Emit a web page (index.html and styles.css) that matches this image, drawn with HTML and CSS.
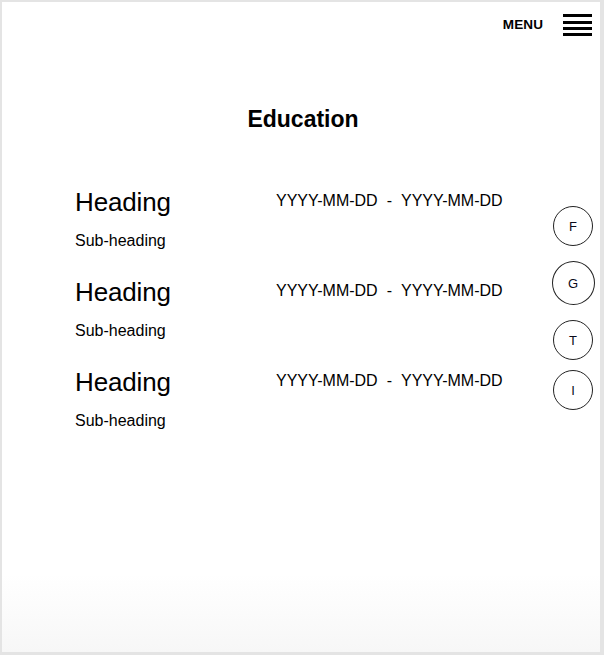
FILE: index.html
```html
<!DOCTYPE html>
<html lang="en">
<head>
<meta charset="utf-8">
<title>Education</title>
<link rel="stylesheet" href="styles.css">
</head>
<body>
<div class="frame">
  <header class="topbar">
    <span class="menu-label">MENU</span>
    <span class="burger" aria-label="Menu">
      <span class="bar"></span>
      <span class="bar"></span>
      <span class="bar"></span>
      <span class="bar"></span>
    </span>
  </header>
  <div class="main">
    <section class="content">
      <h1 class="title">Education</h1>
      <div class="entry">
        <div class="entry-top">
          <h2 class="entry-heading">Heading</h2>
          <div class="entry-dates"><span>YYYY-MM-DD</span><span class="dash">-</span><span>YYYY-MM-DD</span></div>
        </div>
        <p class="entry-sub">Sub-heading</p>
      </div>
      <div class="entry">
        <div class="entry-top">
          <h2 class="entry-heading">Heading</h2>
          <div class="entry-dates"><span>YYYY-MM-DD</span><span class="dash">-</span><span>YYYY-MM-DD</span></div>
        </div>
        <p class="entry-sub">Sub-heading</p>
      </div>
      <div class="entry">
        <div class="entry-top">
          <h2 class="entry-heading">Heading</h2>
          <div class="entry-dates"><span>YYYY-MM-DD</span><span class="dash">-</span><span>YYYY-MM-DD</span></div>
        </div>
        <p class="entry-sub">Sub-heading</p>
      </div>
    </section>
    <nav class="social">
      <a class="social-link social-f">F</a>
      <a class="social-link social-g">G</a>
      <a class="social-link social-t">T</a>
      <a class="social-link social-i">I</a>
    </nav>
  </div>
</div>
</body>
</html>
```

FILE: styles.css
```css
* { box-sizing: border-box; }

html, body {
  margin: 0;
  padding: 0;
}

body {
  font-family: "Liberation Sans", Arial, Helvetica, sans-serif;
  color: #000;
  background: #fff;
}

.frame {
  width: 604px;
  height: 655px;
  border: 2px solid #e4e4e4;
  border-right-width: 4px;
  border-bottom-width: 3px;
  background: linear-gradient(to bottom, #ffffff 0%, #ffffff 88%, #f7f7f7 100%);
  overflow: hidden;
}

.topbar {
  display: flex;
  justify-content: flex-end;
  align-items: center;
  gap: 20px;
  padding: 12px 8px 0 0;
}

.menu-label {
  font-size: 13.5px;
  font-weight: bold;
  line-height: 16px;
  letter-spacing: 0.1px;
}

.burger {
  display: flex;
  flex-direction: column;
  width: 29px;
}

.bar {
  display: block;
  height: 3px;
  background: #000;
  margin-bottom: 3px;
}

.bar:first-child { margin-bottom: 4px; }
.bar:last-child { margin-bottom: 0; }

.main {
  display: flex;
}

.content {
  flex: 1;
  padding-left: 73px;
}

.title {
  margin: 70px -54px 0 -73px;
  text-align: center;
  font-size: 23px;
  line-height: 26px;
  font-weight: bold;
}

.entry:first-of-type { margin-top: 55px; }

.entry {
  padding-bottom: 26.5px;
}

.entry-top {
  display: flex;
  align-items: flex-start;
}

.entry-heading {
  margin: 0;
  width: 201px;
  font-size: 26px;
  line-height: 30px;
  font-weight: normal;
  letter-spacing: -0.15px;
}

.entry-dates {
  display: flex;
  gap: 9px;
  margin-top: 4px;
  font-size: 16px;
  line-height: 20px;
}

.entry-sub {
  margin: 13.5px 0 0 0;
  font-size: 16px;
  line-height: 20px;
}

.social {
  width: 50px;
  padding-top: 170px;
  display: flex;
  flex-direction: column;
  align-items: center;
  padding-right: 4px;
}

.social-link {
  display: flex;
  align-items: center;
  justify-content: center;
  width: 40px;
  height: 40px;
  border: 1px solid #222;
  border-radius: 50%;
  font-size: 13px;
  color: #0a0a1a;
}

.social-g {
  width: 43px;
  height: 44px;
  margin-top: 15px;
}

.social-t { margin-top: 15px; }
.social-i { margin-top: 10px; }
```
